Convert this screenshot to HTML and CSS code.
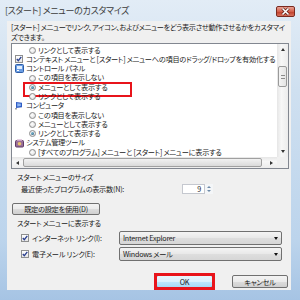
FILE: index.html
```html
<!DOCTYPE html>
<html lang="ja">
<head>
    <meta charset="UTF-8">
    <title>[スタート] メニューのカスタマイズ</title>
    <link rel="stylesheet" href="styles.css">
</head>
<body>
    <div id="window">
        <div class="titlebar">
            <span class="title">[スタート] メニューのカスタマイズ</span>
            <div class="close-btn">
                <svg width="19" height="11" viewBox="0 0 19 11"><path d="M6.5 2.5l6 6M12.5 2.5l-6 6" stroke="#5a1c14" stroke-width="3"/><path d="M6.5 2.5l6 6M12.5 2.5l-6 6" stroke="#fff" stroke-width="1.6"/></svg>
            </div>
        </div>

        <div id="client">
            <p class="desc">[スタート] メニューでリンク、アイコン、およびメニューをどう表示させ動作させるかをカスタマイ<br>ズできます。</p>

            <div class="listbox">
                <div class="list-rows">
                    <div class="row sub"><span class="radio"></span>リンクとして表示する</div>
                    <div class="row"><span class="check"><svg width="6" height="6" viewBox="0 0 6 6"><path d="M0.8 3l1.5 1.7L5.3 0.8" fill="none" stroke="#2a3f8f" stroke-width="1.3"/></svg></span>コンテキスト メニューと [スタート] メニューへの項目のドラッグ/ドロップを有効化する</div>
                    <div class="row"><span class="icon"><svg width="9" height="9" viewBox="0 0 9 9"><rect x="0.5" y="0.5" width="8" height="8" rx="1" fill="#6a9de3" stroke="#2f5ea8"/><rect x="2" y="2" width="5" height="3" fill="#e3f0ff"/><rect x="2" y="6" width="2" height="1" fill="#fff"/></svg></span>コントロール パネル</div>
                    <div class="row sub"><span class="radio"></span>この項目を表示しない</div>
                    <div class="row sub marked"><span class="radio on"></span>メニューとして表示する</div>
                    <div class="row sub"><span class="radio"></span>リンクとして表示する</div>
                    <div class="row"><span class="icon"><svg width="9" height="9" viewBox="0 0 9 9"><path d="M1 1l6 0.8v4.4L1 7z" fill="#2f5cc4"/><path d="M2.2 2.2l3.6 0.5v2.4l-3.6 0.5z" fill="#8fb6f2"/><path d="M1 7v1.5" stroke="#444"/></svg></span>コンピュータ</div>
                    <div class="row sub"><span class="radio"></span>この項目を表示しない</div>
                    <div class="row sub"><span class="radio"></span>メニューとして表示する</div>
                    <div class="row sub"><span class="radio on"></span>リンクとして表示する</div>
                    <div class="row"><span class="icon"><svg width="9" height="9" viewBox="0 0 9 9"><rect x="0.5" y="1.5" width="8" height="6.5" rx="1" fill="#9a6f98" stroke="#5e3b66"/><circle cx="4.5" cy="4.7" r="1.8" fill="#e8c46a"/><rect x="2" y="0.5" width="5" height="1.5" fill="#c9a0c4"/></svg></span>システム管理ツール</div>
                    <div class="row sub"><span class="radio"></span>[すべてのプログラム] メニューと [スタート] メニューに表示する</div>
                </div>
                <div class="vscroll">
                    <div class="sb-btn"><span class="arr up"></span></div>
                    <div class="sb-track">
                        <div class="vthumb"><span class="grip"></span></div>
                    </div>
                    <div class="sb-btn"><span class="arr down"></span></div>
                </div>
                <div class="hscroll">
                    <div class="sb-btn"><span class="arr left"></span></div>
                    <div class="hthumb"></div>
                    <div class="sb-btn"><span class="arr right"></span></div>
                </div>
                <div class="corner"></div>
            </div>

            <div class="group-label">スタート メニューのサイズ</div>
            <div class="count-row">
                <span class="count-label">最近使ったプログラムの表示数(N):</span>
                <div class="spin">
                    <span class="spin-val">9</span>
                    <span class="spin-btns"><span class="arr up small"></span><span class="arr down small"></span></span>
                </div>
            </div>

            <button class="btn default-btn">既定の設定を使用(D)</button>

            <div class="group-label show-label">スタート メニューに表示する</div>
            <div class="link-row">
                <span class="check"><svg width="6" height="6" viewBox="0 0 6 6"><path d="M0.8 3l1.5 1.7L5.3 0.8" fill="none" stroke="#2a3f8f" stroke-width="1.3"/></svg></span>
                <span class="link-label">インターネット リンク(I):</span>
                <div class="combo">Internet Explorer<span class="combo-arr"></span></div>
            </div>
            <div class="link-row">
                <span class="check"><svg width="6" height="6" viewBox="0 0 6 6"><path d="M0.8 3l1.5 1.7L5.3 0.8" fill="none" stroke="#2a3f8f" stroke-width="1.3"/></svg></span>
                <span class="link-label">電子メール リンク(E):</span>
                <div class="combo">Windows メール<span class="combo-arr"></span></div>
            </div>

            <div class="buttons">
                <button class="btn ok-btn">OK</button>
                <button class="btn cancel-btn">キャンセル</button>
            </div>
        </div>
    </div>
</body>
</html>
```

FILE: styles.css
```css
* {
    margin: 0;
    padding: 0;
    box-sizing: border-box;
}
body {
    width: 300px;
    height: 300px;
    overflow: hidden;
    font-family: "Noto Sans CJK JP", "Noto Sans", sans-serif;
    font-feature-settings: "palt";
    font-size: 7.2px;
    letter-spacing: -0.25px;
    color: #1a1a1a;
}
#window {
    height: 300px;
    display: flex;
    flex-direction: column;
    padding: 0 9px 10px 7px;
    background: linear-gradient(to bottom, #e2ecf6 0%, #cfe0f0 30%, #bcd4ec 80%, #a6c4e4 100%);
}
.titlebar {
    height: 21px;
    display: flex;
    align-items: flex-start;
    margin: 0 -9px 0 -7px;
    padding-left: 5px;
}
.title {
    font-size: 9px;
    letter-spacing: -0.3px;
    line-height: 12px;
    margin-top: 5px;
    color: #3c3c3c;
}
.close-btn {
    margin-left: auto;
    margin-right: 5px;
    margin-top: 6px;
    width: 19px;
    height: 11px;
    border: 1px solid #7a2a20;
    border-radius: 2px;
    background: linear-gradient(to bottom, #e8a194 0%, #d4604c 50%, #c0402c 55%, #d7705c 100%);
    display: flex;
}
.close-btn svg {
    margin: -1px;
}
#client {
    flex: 1;
    background-color: #f0f0f0;
    padding: 0 2px 0 4px;
}
.desc {
    margin-top: 1px;
    line-height: 10px;
    letter-spacing: -0.3px;
    white-space: nowrap;
}

/* list */
.listbox {
    margin-top: 1px;
    height: 126px;
    border: 1px solid #828790;
    background-color: #fff;
    display: grid;
    grid-template-columns: 1fr 11px;
    grid-template-rows: 1fr 11px;
}
.list-rows {
    padding-top: 1.5px;
    overflow: hidden;
}
.row {
    position: relative;
    height: 9.3px;
    line-height: 9.3px;
    display: flex;
    align-items: center;
    white-space: nowrap;
    padding-left: 3px;
}
.row.sub {
    padding-left: 17px;
}
.row.marked::after {
    content: "";
    position: absolute;
    left: 11px;
    top: -1px;
    width: 105px;
    height: 11px;
    border: 2px solid #e8141b;
}
.radio {
    width: 7px;
    height: 7px;
    border-radius: 50%;
    border: 1px solid #8c8c8c;
    background: radial-gradient(circle at 40% 40%, #ffffff, #d8d8d8);
    margin-right: 2px;
    display: flex;
    align-items: center;
    justify-content: center;
    flex-shrink: 0;
}
.radio.on::after {
    content: "";
    width: 3px;
    height: 3px;
    border-radius: 50%;
    background: radial-gradient(circle at 35% 35%, #7fc0d8, #1d4d6e);
}
.check {
    width: 8px;
    height: 8px;
    border: 1px solid #8e8f8f;
    background: linear-gradient(to bottom, #ffffff, #e6e6e6);
    margin-right: 3px;
    display: flex;
    align-items: center;
    justify-content: center;
    flex-shrink: 0;
}
.icon {
    width: 9px;
    height: 9px;
    margin-right: 2px;
    display: flex;
    flex-shrink: 0;
}

/* scrollbars */
.vscroll {
    display: flex;
    flex-direction: column;
    background: linear-gradient(to right, #e6e6e6, #f7f7f7 40%, #ececec);
}
.sb-track {
    flex: 1;
    padding-top: 11px;
}
.sb-btn {
    width: 11px;
    height: 11px;
    display: flex;
    align-items: center;
    justify-content: center;
    flex-shrink: 0;
}
.vthumb {
    margin: 0 1px;
    height: 21px;
    border: 1px solid #9a9a9a;
    border-radius: 2px;
    background: linear-gradient(to right, #f4f4f4, #e4e4e4);
    display: flex;
    align-items: center;
    justify-content: center;
}
.grip {
    width: 4px;
    height: 4px;
    border-top: 1px solid #8a8a8a;
    border-bottom: 1px solid #8a8a8a;
}
.hscroll {
    display: flex;
    align-items: center;
    background: linear-gradient(to bottom, #e6e6e6, #f7f7f7 40%, #ececec);
}
.hthumb {
    flex: 1;
    height: 9px;
    margin-right: 4px;
    border: 1px solid #a0a0a0;
    border-radius: 2px;
    background: linear-gradient(to bottom, #f2f2f2, #dadada);
}
.corner {
    background-color: #f0f0f0;
}
.arr {
    width: 0;
    height: 0;
    border: 2px solid transparent;
}
.arr.up {
    border-bottom: 3px solid #333;
    border-top-width: 0;
}
.arr.down {
    border-top: 3px solid #333;
    border-bottom-width: 0;
}
.arr.left {
    border-right: 3px solid #333;
    border-left-width: 0;
}
.arr.right {
    border-left: 3px solid #333;
    border-right-width: 0;
}
.arr.small {
    border-width: 0 2px;
}
.arr.small.up {
    border-bottom: 2px solid #6d8aa8;
}
.arr.small.down {
    border-top: 2px solid #6d8aa8;
}

/* lower part */
.group-label {
    margin-top: 3px;
    margin-left: 6px;
    line-height: 10px;
}
.count-row {
    display: flex;
    align-items: center;
    margin-top: 1px;
    height: 11px;
}
.count-label {
    width: 171px;
    padding-left: 10px;
}
.spin {
    display: flex;
    height: 10px;
}
.spin-val {
    width: 23px;
    border: 1px solid #c5c8cf;
    background-color: #fff;
    text-align: right;
    padding-right: 3px;
    line-height: 8px;
}
.spin-btns {
    width: 8px;
    display: flex;
    flex-direction: column;
    align-items: center;
    justify-content: space-evenly;
    background-color: #f4f6f8;
}
.btn {
    font-family: inherit;
    font-feature-settings: "palt";
    font-size: 7.2px;
    letter-spacing: -0.25px;
    color: #1a1a1a;
    border: 1px solid #707070;
    border-radius: 2px;
    background: linear-gradient(to bottom, #f3f3f3 0%, #ebebeb 50%, #dddddd 50%, #cfcfcf 100%);
    line-height: 10px;
}
.default-btn {
    display: block;
    margin-top: 9px;
    margin-left: 1px;
    width: 88px;
    height: 12px;
}
.show-label {
    margin-top: 3px;
}
.link-row {
    display: flex;
    align-items: center;
    height: 14px;
    margin-top: 3px;
    padding-left: 10px;
}
.link-row + .link-row {
    margin-top: 2px;
}
.link-label {
    width: 87px;
}
.combo {
    position: relative;
    width: 163px;
    height: 14px;
    border: 1px solid #707070;
    border-radius: 2px;
    background: linear-gradient(to bottom, #f4f4f4, #e8e8e8 50%, #dedede 50%, #d6d6d6);
    padding-left: 3px;
    line-height: 12px;
}
.combo-arr {
    position: absolute;
    right: 3px;
    top: 5px;
    border-left: 2.5px solid transparent;
    border-right: 2.5px solid transparent;
    border-top: 3px solid #111;
}
.buttons {
    display: flex;
    justify-content: flex-end;
    gap: 19px;
    margin-top: 14px;
    padding-right: 1px;
}
.ok-btn {
    position: relative;
    width: 57px;
    height: 13px;
    border-color: #3c7fb1;
    background: linear-gradient(to bottom, #eaf6fd 0%, #d9f0fc 50%, #bee6fd 50%, #a7d9f5 100%);
}
.ok-btn::after {
    content: "";
    position: absolute;
    left: -3px;
    top: -3px;
    right: -3px;
    bottom: -3px;
    border: 3px solid #e8141b;
}
.cancel-btn {
    width: 56px;
    height: 13px;
}
```
